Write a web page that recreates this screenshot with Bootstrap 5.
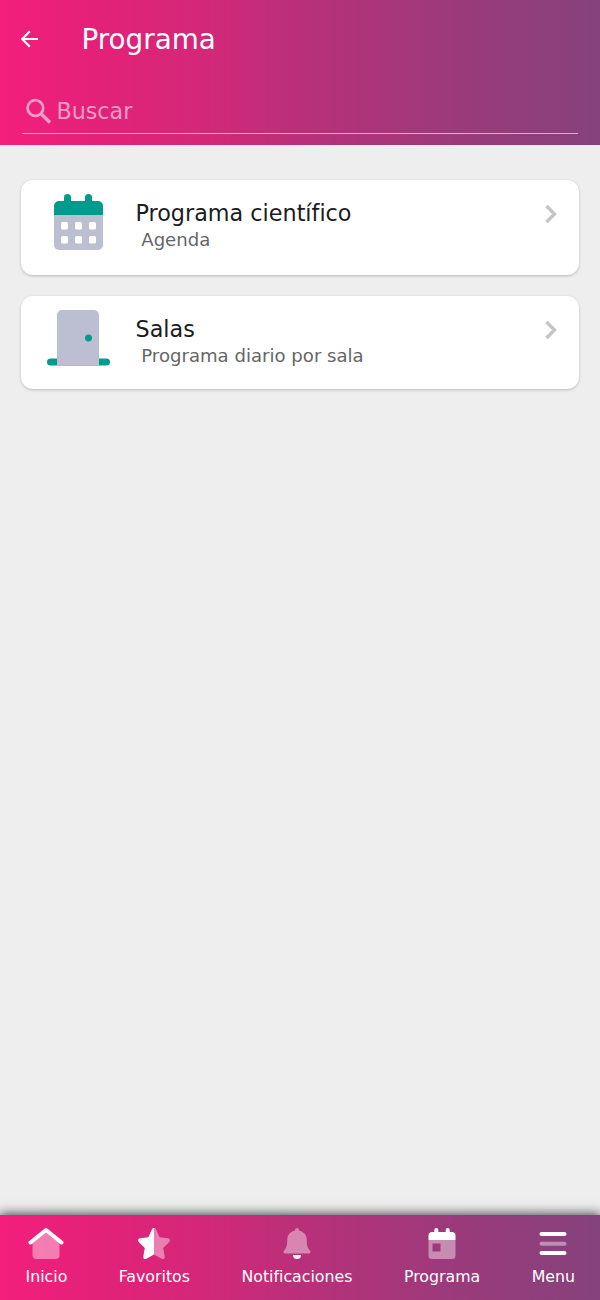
<!DOCTYPE html>
<html lang="es">
<head>
<meta charset="utf-8">
<meta name="viewport" content="width=device-width, initial-scale=1">
<title>Programa</title>
<link href="https://cdn.jsdelivr.net/npm/bootstrap@5.3.0/dist/css/bootstrap.min.css" rel="stylesheet">
<style>
body{font-family:"DejaVu Sans",sans-serif;background:#eee;color:#1c1c1c}
svg{display:block;flex:none}
.brand-gradient{background:linear-gradient(90deg,#f31f7b 0,#e32179 16%,#d22879 35%,#b93079 50%,#9c3a7b 75%,#85427c 100%)}
.app-header{height:145px;padding:0 22px 0 21px}
.title-row{height:78px}
.app-title{font-size:27.8px;line-height:34px;margin:1px 0 0 43.500px}
.search-row{height:56px;border-bottom:1.500px solid #f2a3cb;padding-top:10px;margin-left:1px}
.search-row input{font-size:22.2px;line-height:30px;color:#fff;padding-left:4.500px}
.search-row input::placeholder{color:#f59bc8;opacity:1}
.program-list{padding:35px 21px 0;gap:21px}
.program-item{height:95px;border-radius:12px;box-shadow:0 1px 3px rgba(0,0,0,.22);padding:13px 21px 0 22px}
.program-item.room{height:93px}
.item-title{font-size:22.3px;line-height:28px}
.item-note{font-size:18.1px;line-height:25px;color:#666;white-space:pre}
.item-text{margin-left:22.500px;padding-top:5.500px}
.bottom-nav{height:85px;padding:11px 25px 0 25.500px;box-shadow:0 0 11px 1px rgba(0,0,0,.75)}
.bottom-nav a{font-size:15.8px;line-height:22px;gap:6px}
</style>
<script src="https://cdn.jsdelivr.net/npm/bootstrap@5.3.0/dist/js/bootstrap.bundle.min.js"></script>
</head>
<body>
<div class="d-flex flex-column vh-100 overflow-hidden">
  <header class="app-header brand-gradient text-white flex-shrink-0">
    <div class="title-row d-flex align-items-center">
      <a href="#" aria-label="Volver"><svg width="17" height="18" viewBox="0 0 17 18" fill="none" stroke="#fff" stroke-width="2.1"><path d="M17 9H1.500M8.800 1.300 1.300 9l7.500 7.700"/></svg></a>
      <h1 class="app-title fw-normal">Programa</h1>
    </div>
    <div class="search-row d-flex align-items-center">
      <svg width="30" height="32" viewBox="0 0 30 32" fill="none" stroke="#f59bc8"><circle cx="13.4" cy="13" r="7.8" stroke-width="2.8"/><path d="m19 18.800 9 8.800" stroke-width="3.500"/></svg>
      <input class="form-control-plaintext border-0 py-0" type="text" placeholder="Buscar" aria-label="Buscar">
    </div>
  </header>
  <main class="program-list d-flex flex-column flex-grow-1">
    <a href="#" class="program-item bg-white d-flex align-items-start text-reset text-decoration-none">
      <svg width="70" height="60" viewBox="0 0 70 60"><path d="M11 21h49v31a5 5 0 0 1-5 5H16a5 5 0 0 1-5-5z" fill="#bcbed1"/><path d="M11 22v-9a5 5 0 0 1 5-5h5V4.500a3.500 3.500 0 0 1 7 0V8h14V4.500a3.500 3.500 0 0 1 7 0V8h6a5 5 0 0 1 5 5v9z" fill="#009b8d"/><g fill="#fff"><rect x="18" y="29" width="7" height="7.500" rx="1.500"/><rect x="32" y="29" width="7" height="7.500" rx="1.500"/><rect x="46" y="29" width="7" height="7.500" rx="1.500"/><rect x="18" y="43" width="7" height="7.500" rx="1.500"/><rect x="32" y="43" width="7" height="7.500" rx="1.500"/><rect x="46" y="43" width="7" height="7.500" rx="1.500"/></g></svg>
      <div class="item-text flex-grow-1"><div class="item-title">Programa científico</div><div class="item-note"> Agenda</div></div>
      <svg class="mt-2" width="14" height="26" viewBox="0 0 14 26" fill="none" stroke="#c4c4c4" stroke-width="3.400"><path d="m2.500 5 8 8-8 8"/></svg>
    </a>
    <a href="#" class="program-item room bg-white d-flex align-items-start text-reset text-decoration-none">
      <svg width="70" height="60" viewBox="0 0 70 60"><rect x="4" y="49.500" width="63" height="7" rx="3.500" fill="#009b8d"/><path d="M14 56.500V6a5 5 0 0 1 5-5h32a5 5 0 0 1 5 5v50.500z" fill="#bcbed1"/><circle cx="45.500" cy="29" r="3.500" fill="#009b8d"/></svg>
      <div class="item-text flex-grow-1"><div class="item-title">Salas</div><div class="item-note"> Programa diario por sala</div></div>
      <svg class="mt-2" width="14" height="26" viewBox="0 0 14 26" fill="none" stroke="#c4c4c4" stroke-width="3.400"><path d="m2.500 5 8 8-8 8"/></svg>
    </a>
  </main>
  <nav class="bottom-nav brand-gradient d-flex justify-content-between align-items-start flex-shrink-0">
    <a href="#" class="d-flex flex-column align-items-center text-white text-decoration-none">
      <svg width="36" height="34" viewBox="0 0 36 34"><path d="M4.500 15 18 4l13.500 11v14a4 4 0 0 1-4 4h-19a4 4 0 0 1-4-4z" fill="#fff" opacity=".42"/><path d="M2.500 16.500 18 4l15.500 12.500" fill="none" stroke="#fff" stroke-width="4" stroke-linecap="round" stroke-linejoin="round"/></svg>
      <span>Inicio</span></a>
    <a href="#" class="d-flex flex-column align-items-center text-white text-decoration-none">
      <svg width="36" height="34" viewBox="0 0 36 34" fill="#fff"><path d="M18 2c-.9 0-1.600.4-2 1.300l-3.600 7.900-8.400 1.100c-2 .3-2.700 2.200-1.200 3.600l6 6-1.500 8.500c-.3 2 1.200 3.300 3 2.300L18 28.500z"/><path opacity=".42" d="M18 2c.9 0 1.600.4 2 1.300l3.600 7.900 8.400 1.100c2 .3 2.700 2.200 1.200 3.600l-6 6 1.500 8.500c.3 2-1.200 3.300-3 2.300L18 28.500z"/></svg>
      <span>Favoritos</span></a>
    <a href="#" class="d-flex flex-column align-items-center text-white text-decoration-none">
      <svg width="36" height="34" viewBox="0 0 36 34" fill="#fff"><path opacity=".42" d="M16 4.500V4a2 2 0 0 1 4 0v.5c4.800 1 7.700 4.600 7.700 9 0 6.500 1 8.500 3.400 11.300.9 1.100.4 2.700-1 2.700H5.900c-1.400 0-1.900-1.600-1-2.700 2.400-2.800 3.400-4.800 3.400-11.300 0-4.400 2.900-8 7.700-9z"/><path d="M14 29h8a4 4 0 0 1-8 0z"/></svg>
      <span>Notificaciones</span></a>
    <a href="#" class="d-flex flex-column align-items-center text-white text-decoration-none">
      <svg width="36" height="34" viewBox="0 0 36 34" fill="#fff"><path opacity=".42" fill-rule="evenodd" d="M4.500 14h27v15.500a3.500 3.500 0 0 1-3.500 3.500H8a3.500 3.500 0 0 1-3.500-3.500zm4 3.500v8h8v-8z"/><path d="M4.500 14V9.500A3.500 3.500 0 0 1 8 6h2.300V4a2 2 0 0 1 4 0v2h7.400V4a2 2 0 0 1 4 0v2H28a3.500 3.500 0 0 1 3.500 3.500V14z"/></svg>
      <span>Programa</span></a>
    <a href="#" class="d-flex flex-column align-items-center text-white text-decoration-none">
      <svg width="36" height="34" viewBox="0 0 36 34" fill="#fff"><rect x="4.500" y="6" width="27" height="4" rx="2"/><rect opacity=".42" x="4.500" y="15.700" width="27" height="4" rx="2"/><rect x="4.500" y="25" width="27" height="4" rx="2"/></svg>
      <span>Menu</span></a>
  </nav>
</div>
</body>
</html>
